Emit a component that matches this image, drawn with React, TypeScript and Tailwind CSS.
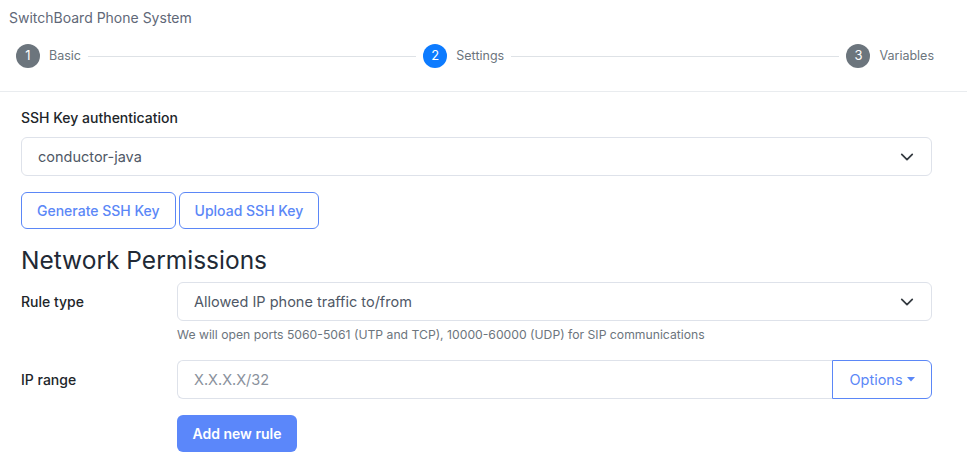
import React from "react";

const Chevron = () => (
  <svg width="14" height="14" viewBox="0 0 16 16" fill="none" stroke="#343a40" strokeWidth="2" strokeLinecap="round" strokeLinejoin="round">
    <path d="M2 5l6 6 6-6" />
  </svg>
);

const Step = ({ n, label, active }: { n: number; label: string; active?: boolean }) => (
  <div className="flex items-center gap-[9px] shrink-0">
    <div
      className={`w-[24px] h-[24px] rounded-full flex items-center justify-center text-white text-[13px] ${
        active ? "bg-[#0d7bff]" : "bg-[#6c757d]"
      }`}
    >
      {n}
    </div>
    <span className="text-[12.5px] text-[#6c757d]">{label}</span>
  </div>
);

export default function App() {
  return (
    <div className="w-[967px] h-[462px] bg-white overflow-hidden" style={{ fontFamily: "Inter, 'Noto Sans', sans-serif" }}>
      <div className="border-b border-[#e9ecef] pb-[23px]">
        <div className="pl-[9px] pt-[8px] text-[14px] text-[#5f6878] leading-[20px]">SwitchBoard Phone System</div>
        <div className="flex items-center pl-[16px] pr-[33px] mt-[16px]">
          <Step n={1} label="Basic" />
          <div className="flex-1 h-px bg-[#dee2e6] mx-[7px]" />
          <Step n={2} label="Settings" active />
          <div className="flex-1 h-px bg-[#dee2e6] mx-[7px]" />
          <Step n={3} label="Variables" />
        </div>
      </div>

      <div className="px-[21px] pr-[35px] pt-[16px]">
        <div className="text-[14px] font-medium text-[#212529] leading-[20px]">SSH Key authentication</div>
        <div className="mt-[9px] h-[39px] border border-[#dee2ea] rounded-[6px] flex items-center justify-between pl-[16px] pr-[17px]">
          <span className="text-[14.5px] text-[#4f5866]">conductor-java</span>
          <Chevron />
        </div>
        <div className="flex gap-[3px] mt-[16px]">
          <button className="h-[37px] px-[15px] whitespace-nowrap border border-[#5b87f7] rounded-[6px] text-[#5b87f7] text-[14px] font-medium">
            Generate SSH Key
          </button>
          <button className="h-[37px] px-[15px] whitespace-nowrap border border-[#5b87f7] rounded-[6px] text-[#5b87f7] text-[14px] font-medium">
            Upload SSH Key
          </button>
        </div>
        <div className="mt-[14px] text-[24.5px] leading-[34px] text-[#212935]">Network Permissions</div>

        <div className="mt-[5px] flex">
          <div className="w-[156px] shrink-0 h-[39px] flex items-center text-[14px] font-medium text-[#212529]">Rule type</div>
          <div className="flex-1">
            <div className="h-[39px] border border-[#dee2ea] rounded-[6px] flex items-center justify-between pl-[16px] pr-[17px]">
              <span className="text-[14.5px] text-[#4f5866]">Allowed IP phone traffic to/from</span>
              <Chevron />
            </div>
            <div className="mt-[5px] text-[12.2px] text-[#6c757d] leading-[18px]">
              We will open ports 5060-5061 (UTP and TCP), 10000-60000 (UDP) for SIP communications
            </div>
          </div>
        </div>

        <div className="mt-[16px] flex">
          <div className="w-[156px] shrink-0 h-[39px] flex items-center text-[14px] font-medium text-[#212529]">IP range</div>
          <div className="flex-1">
            <div className="flex h-[39px]">
              <div className="flex-1 border border-r-0 border-[#dee2ea] rounded-l-[6px] flex items-center pl-[16px] text-[14.5px] text-[#8a919c]">
                X.X.X.X/32
              </div>
              <button className="w-[100px] border border-[#5b87f7] rounded-r-[6px] text-[#5b87f7] text-[14.5px] flex items-center justify-center gap-[4px]">
                Options
                <svg width="8" height="5" viewBox="0 0 8 5"><path d="M0 0h8L4 4.5z" fill="#5b87f7" /></svg>
              </button>
            </div>
            <button className="mt-[16px] h-[37px] w-[120px] bg-[#5b87fa] rounded-[6px] text-white text-[14px] font-semibold">
              Add new rule
            </button>
          </div>
        </div>
      </div>
    </div>
  );
}
